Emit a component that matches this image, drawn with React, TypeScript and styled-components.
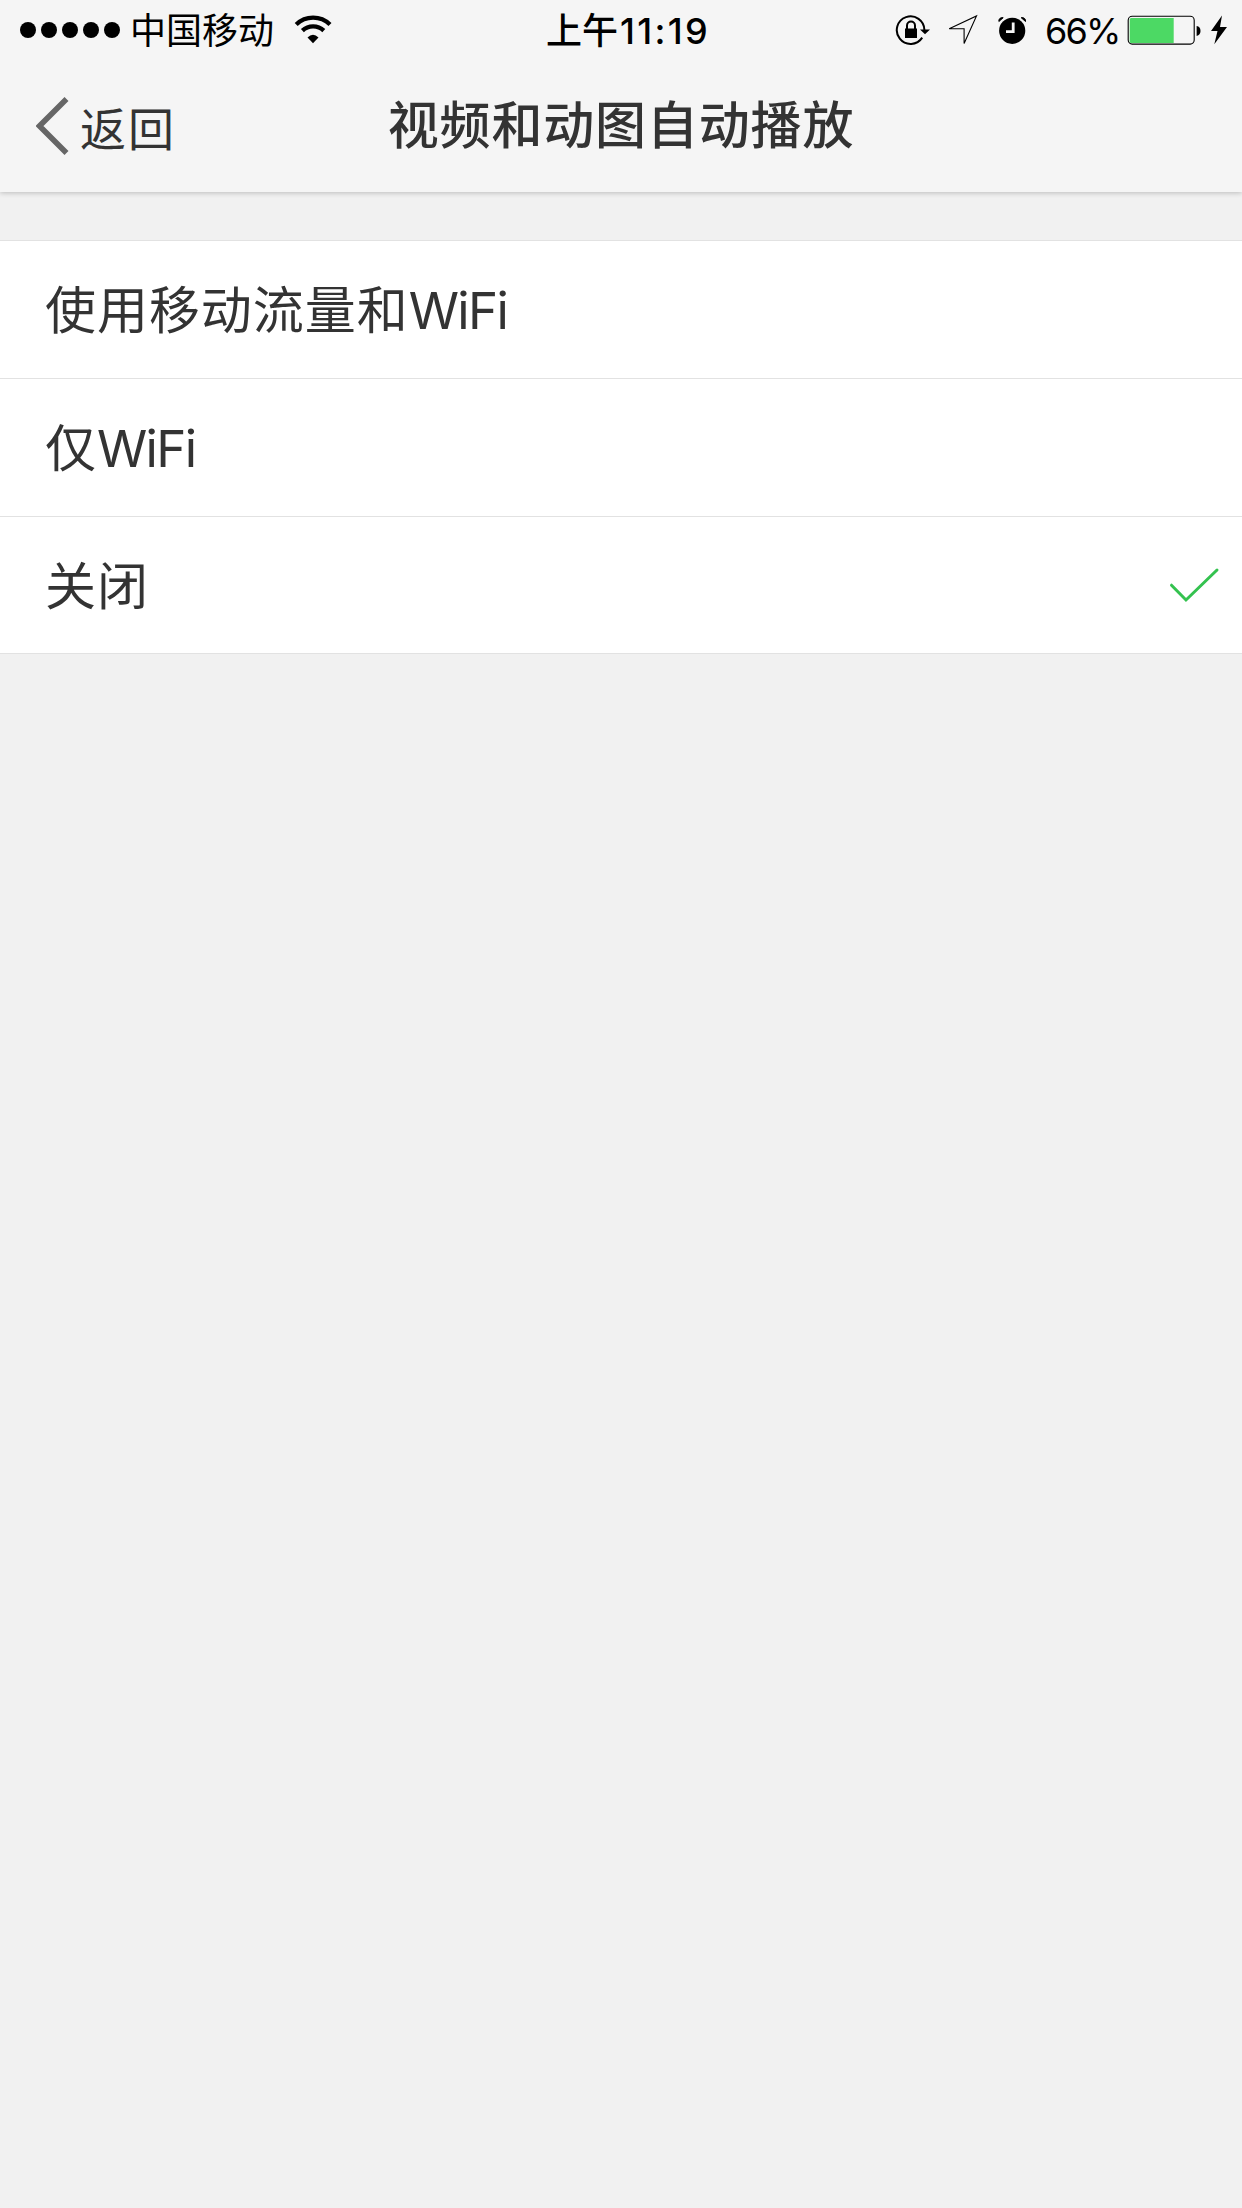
import React from "react";
import styled, { createGlobalStyle } from "styled-components";

const GlobalStyle = createGlobalStyle`
  * { box-sizing: border-box; }
  html, body { margin: 0; padding: 0; background: #f1f1f1; }
`;

const Screen = styled.main`
  width: 1242px;
  min-height: 2208px;
  display: flex;
  flex-direction: column;
  background: #f1f1f1;
  color: #333;
  font-family: Inter, "Noto Sans CJK SC", sans-serif;
  overflow: hidden;
`;

const Header = styled.header`
  height: 192px;
  background: #f5f5f5;
  box-shadow: 0 1px 5px rgba(0, 0, 0, 0.22);
`;

const StatusBar = styled.div`
  height: 60px;
  display: flex;
  align-items: center;
  color: #000;
  font-size: 36px;
  line-height: 60px;
  white-space: nowrap;
`;

const StatusLeft = styled.div`
  width: 546px;
  display: flex;
  align-items: center;
  padding-left: 20px;
`;

const Signal = styled.div`
  display: flex;
  gap: 5px;
`;

const Dot = styled.span`
  width: 16px;
  height: 16px;
  border-radius: 50%;
  background: #000;
`;

const Carrier = styled.span`
  width: 174px;
  padding: 2px 0 0 10px;
`;

const Time = styled.div`
  flex: 1;
  padding-top: 2px;
  font-weight: 500;
`;

const Clock = styled.span`
  margin-left: 2px;
  font-weight: 550;
  letter-spacing: 2.3px;
`;

const StatusRight = styled.div`
  width: 346px;
  display: flex;
  align-items: center;
`;

const Glyph = styled.svg<{ $gap?: number }>`
  display: block;
  flex: none;
  margin-left: ${(p) => p.$gap ?? 0}px;
`;

const Percent = styled.span`
  width: 82px;
  padding-top: 1px;
  margin-left: 17px;
  letter-spacing: -1.8px;
`;

const NavBar = styled.div`
  height: 132px;
  display: grid;
  grid-template-columns: 300px 1fr 300px;
  align-items: center;
`;

const BackButton = styled.button`
  height: 132px;
  display: flex;
  align-items: center;
  padding: 0 0 0 36px;
  border: 0;
  background: none;
  color: #333;
  font: inherit;
  font-size: 46px;
  line-height: 126px;
`;

const BackLabel = styled.span`
  padding: 5px 0 0 10px;
  letter-spacing: 2px;
`;

const Title = styled.h1`
  margin: 0;
  text-align: center;
  font-size: 51px;
  font-weight: 500;
  line-height: 132px;
  letter-spacing: 0.83px;
  white-space: nowrap;
`;

const OptionList = styled.ul`
  margin: 48px 0 0;
  padding: 0;
  list-style: none;
  background: #fff;
  border-top: 1px solid #e2e2e2;
`;

const Option = styled.li<{ $last?: boolean }>`
  height: ${(p) => (p.$last ? 137 : 138)}px;
  display: flex;
  align-items: center;
  justify-content: space-between;
  padding: 0 22px 0 45px;
  border-bottom: 1px solid #e2e2e2;
  font-size: 51px;
  line-height: 135px;
  letter-spacing: 0.95px;
`;

const Label = styled.span`
  padding-top: 2px;
`;

const Latin = styled.span`
  letter-spacing: -1.6px;
`;

const WifiIcon = () => (
  <Glyph width="38" height="30" viewBox="0 1 38 30">
    <g fill="none" stroke="#000" strokeWidth="4.3">
      <path d="M2.2 10.5A24.3 24.3 0 0 1 36 10.5" />
      <path d="M8.4 16.6A15.5 15.5 0 0 1 29.8 16.6" />
    </g>
    <path d="M13.5 23.5Q19 18.2 24.5 23.5L19 29.3Z" />
  </Glyph>
);

const RotationLockIcon = () => (
  <Glyph $gap={-1} width="36" height="32" viewBox="0 0 36 32">
    <path d="M29.4 16A13.8 13.8 0 1 0 27.2 23.6" fill="none" stroke="#000" strokeWidth="2" />
    <path d="M25 15.4H35L30 20.2Z" />
    <rect x="10" y="14.5" width="12" height="9.5" />
    <path d="M12 15V11.6a4 4 0 0 1 8 0V15" fill="none" stroke="#000" strokeWidth="2" />
  </Glyph>
);

const LocationIcon = () => (
  <Glyph $gap={16} width="32" height="32" viewBox="0 0 32 32">
    <path d="M2.2 14.8L29.5 2L17.1 29.5V14.8Z" fill="none" stroke="#000" strokeWidth="1.1" />
  </Glyph>
);

const AlarmIcon = () => (
  <Glyph $gap={19} width="30" height="30" viewBox="0 0 30 30">
    <circle cx="14.2" cy="15.8" r="13.1" />
    <path d="M.9 6.5C.4 4.2 2.3 2.2 5.2 2.7Z M27.5 6.5C28 4.2 26.1 2.2 23.2 2.7Z" stroke="#000" strokeLinejoin="round" />
    <path d="M15.2 7.6V16.6H8" fill="none" stroke="#f5f5f5" strokeWidth="2.8" />
  </Glyph>
);

const BatteryIcon = () => (
  <Glyph width="76" height="32" viewBox="0 0 76 32">
    <rect x="1.2" y="2.3" width="66" height="27.8" rx="4" fill="none" stroke="#000" strokeWidth="1.1" />
    <path d="M4.2 4H46.7V29H4.2Q2.7 29 2.7 27.5V5.5Q2.7 4 4.2 4Z" fill="#4cd964" />
    <path d="M69.6 12Q73.5 12.5 73.5 16.8T69.6 22Z" />
  </Glyph>
);

const BoltIcon = () => (
  <Glyph $gap={7} width="18" height="32" viewBox="0 0 18 32">
    <path d="M12 1.5L1 17H7.5L4.3 30.2L17 13H10Z" />
  </Glyph>
);

const BackIcon = () => (
  <Glyph width="34" height="58" viewBox="0 0 34 58">
    <path d="M30.5 2L3.5 29L30.5 56" fill="none" stroke="#666" strokeWidth="5.6" />
  </Glyph>
);

const CheckIcon = () => (
  <Glyph width="52" height="38" viewBox="0 0 52 38">
    <path d="M3.5 19.2L18 34L49 4" fill="none" stroke="#34c24f" strokeWidth="3" strokeLinecap="round" />
  </Glyph>
);

const options = [
  { id: "all", zh: "使用移动流量和", latin: "WiFi" },
  { id: "wifi", zh: "仅", latin: "WiFi" },
  { id: "off", zh: "关闭", latin: "" },
];

export default function App() {
  const selected = "off";
  return (
    <>
      <GlobalStyle />
      <Screen>
        <Header>
          <StatusBar>
            <StatusLeft>
              <Signal>
                {[0, 1, 2, 3, 4].map((i) => (
                  <Dot key={i} />
                ))}
              </Signal>
              <Carrier>中国移动</Carrier>
              <WifiIcon />
            </StatusLeft>
            <Time>
              上午<Clock>11:19</Clock>
            </Time>
            <StatusRight>
              <RotationLockIcon />
              <LocationIcon />
              <AlarmIcon />
              <Percent>66%</Percent>
              <BatteryIcon />
              <BoltIcon />
            </StatusRight>
          </StatusBar>
          <NavBar>
            <BackButton>
              <BackIcon />
              <BackLabel>返回</BackLabel>
            </BackButton>
            <Title>视频和动图自动播放</Title>
          </NavBar>
        </Header>
        <OptionList>
          {options.map((o, i) => (
            <Option key={o.id} $last={i === options.length - 1}>
              <Label>
                {o.zh}
                {o.latin && <Latin>{o.latin}</Latin>}
              </Label>
              {o.id === selected && <CheckIcon />}
            </Option>
          ))}
        </OptionList>
      </Screen>
    </>
  );
}
